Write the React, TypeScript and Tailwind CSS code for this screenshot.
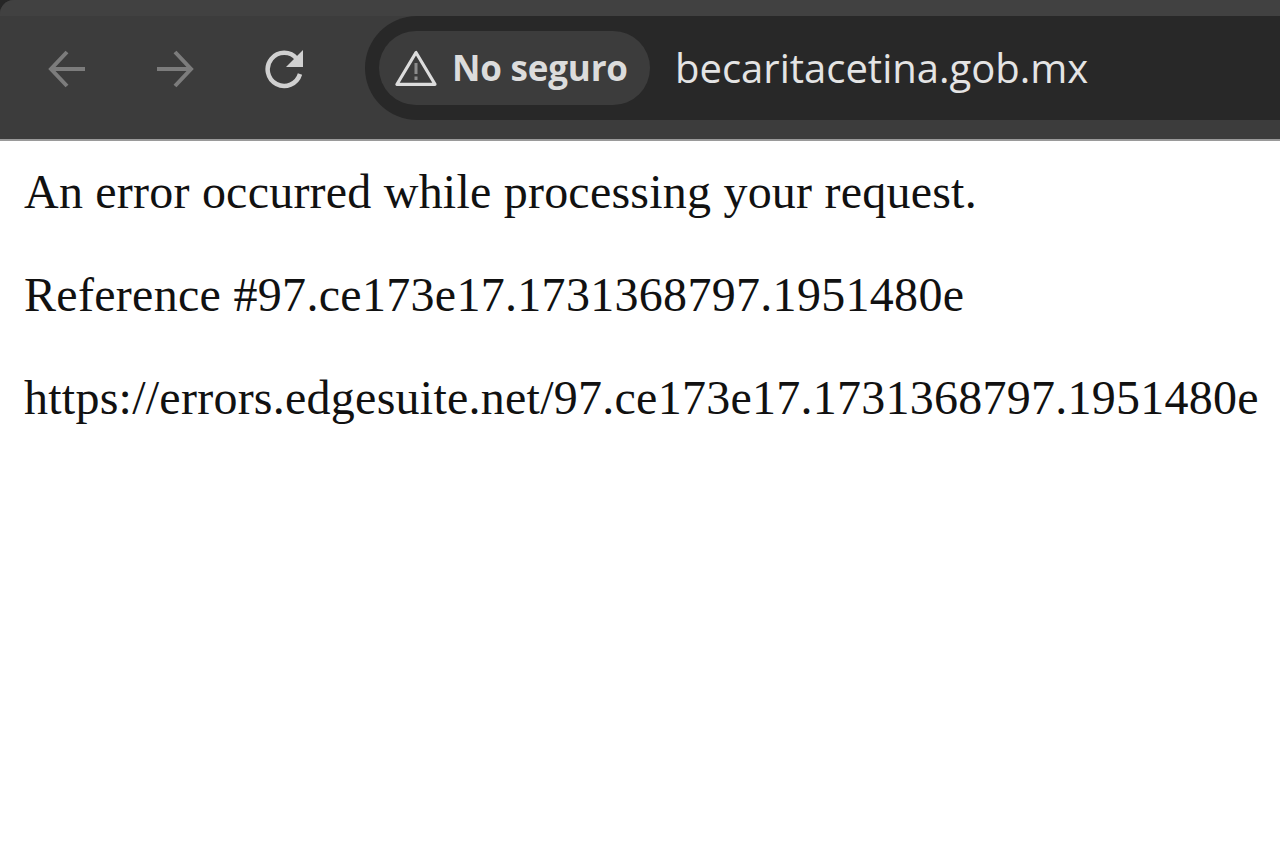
import React from "react";

function Back({ className }: { className: string }) {
  return (
    <svg viewBox="0 0 38 38" className={className} fill="none" stroke="currentColor" strokeWidth="4">
      <path d="M37 19H4M19 2L3 19l16 17" />
    </svg>
  );
}

function Forward({ className }: { className: string }) {
  return (
    <svg viewBox="0 0 38 38" className={className} fill="none" stroke="currentColor" strokeWidth="4">
      <path d="M1 19h33M19 2l16 17-16 17" />
    </svg>
  );
}

function Reload({ className }: { className: string }) {
  return (
    <svg viewBox="0 0 40 40" className={className}>
      <path d="M35 25a16.500 16.500 0 1 1-3-15" fill="none" stroke="currentColor" strokeWidth="4.500" />
      <path d="M38 1v17H21z" fill="currentColor" />
    </svg>
  );
}

function Warning({ className }: { className: string }) {
  return (
    <svg viewBox="0 0 42 36" className={className} fill="none">
      <path d="M21 2.500L2 34.300h38z" stroke="currentColor" strokeWidth="3.200" strokeLinejoin="round" />
      <path d="M21 13v11M21 26.500v3.500" stroke="#8c8c8c" strokeWidth="3" />
    </svg>
  );
}

export default function App() {
  return (
    <div className="w-[1280px] h-[853px] bg-white overflow-hidden flex flex-col font-['Liberation_Serif',serif]">
      <div className="h-[141px] shrink-0 bg-[#262626] border-b-2 border-[#9a9a9a]">
        <div className="h-full bg-[#3c3c3c] rounded-tl-[14px] flex flex-col overflow-hidden">
          <div className="h-[16px] bg-[#414141]" />
          <div className="flex-1 flex items-start pl-[48px]">
            <Back className="w-[38px] h-[38px] text-[#7c7c7c] mt-[34px]" />
            <Forward className="w-[38px] h-[38px] text-[#7c7c7c] ml-[70px] mt-[34px]" />
            <Reload className="w-[40px] h-[40px] text-[#d0d0d0] ml-[71px] mt-[33px]" />
            <div className="ml-[60px] flex-1 h-[104px] bg-[#282828] rounded-l-[52px] flex items-center pl-[14px]">
              <div className="h-[74px] w-[271px] rounded-[37px] bg-[#3c3c3c] flex items-center pl-[16px] gap-[15px] font-['Open_Sans',sans-serif]">
                <Warning className="w-[42px] h-[36px] text-[#dcdcdc]" />
                <span className="text-[35px] font-bold tracking-[-0.2px] text-[#dcdcdc]">No seguro</span>
              </div>
              <span className="ml-[25px] text-[40px] text-[#e4e4e4] font-['Open_Sans',sans-serif]">becaritacetina.gob.mx</span>
            </div>
          </div>
        </div>
      </div>
      <div className="pl-[24px] pt-[25px] text-[48px] leading-[52px] text-[#111111] flex flex-col gap-[51px] whitespace-nowrap">
        <p className="tracking-[0.22px]">An error occurred while processing your request.</p>
        <p className="tracking-[0.3px]">Reference #97.ce173e17.1731368797.1951480e</p>
        <p className="tracking-[0.25px]">https://errors.edgesuite.net/97.ce173e17.1731368797.1951480e</p>
      </div>
    </div>
  );
}
